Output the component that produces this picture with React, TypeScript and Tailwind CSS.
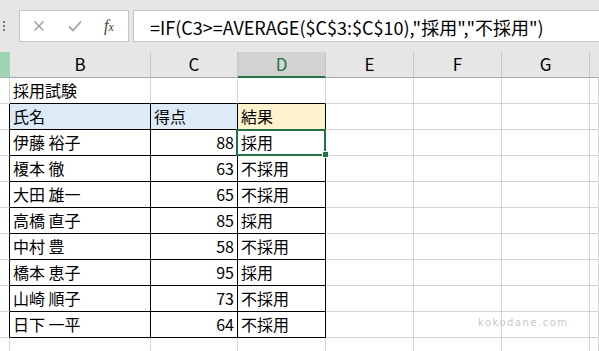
import React from "react";

type Person = { name: string; score: number; result: string };

const people: Person[] = [
  { name: "伊藤 裕子", score: 88, result: "採用" },
  { name: "榎本 徹", score: 63, result: "不採用" },
  { name: "大田 雄一", score: 65, result: "不採用" },
  { name: "高橋 直子", score: 85, result: "採用" },
  { name: "中村 豊", score: 58, result: "不採用" },
  { name: "橋本 恵子", score: 95, result: "採用" },
  { name: "山崎 順子", score: 73, result: "不採用" },
  { name: "日下 一平", score: 64, result: "不採用" },
];

const COLS = "grid grid-cols-[10px_141px_87px_88px_88px_88px_88px_1fr]";

function Cell({
  children,
  right = false,
  bottom = false,
  className = "",
}: {
  children?: React.ReactNode;
  right?: boolean;
  bottom?: boolean;
  className?: string;
}) {
  return (
    <div
      className={`h-[26px] border-r border-b flex items-center px-[3px] pb-[2px] leading-none text-[16px] text-black whitespace-nowrap ${
        right ? "border-r-black" : "border-r-[#d4d4d4]"
      } ${bottom ? "border-b-black" : "border-b-[#d4d4d4]"} ${className}`}
    >
      {children}
    </div>
  );
}

function FormulaBar() {
  return (
    <div className="h-[52px] bg-[#e6e6e6] flex items-start pt-[10px]">
      <div className="w-[19px] flex flex-col gap-[2px] pl-[3px] pt-[11px]">
        <span className="w-[2px] h-[2px] bg-[#7a7a7a]" />
        <span className="w-[2px] h-[2px] bg-[#7a7a7a]" />
        <span className="w-[2px] h-[2px] bg-[#7a7a7a]" />
      </div>
      <div className="w-[110px] h-[32px] bg-white border border-[#c6c6c6] flex items-center">
        <svg width="12" height="12" viewBox="0 0 12 12" className="ml-[13px]">
          <path d="M1.5 1.5l9 9M10.5 1.5l-9 9" stroke="#9a9a9a" strokeWidth="1.4" fill="none" />
        </svg>
        <svg width="14" height="12" viewBox="0 0 14 12" className="ml-[23px]">
          <path d="M1 6.5l4 4L13 1.5" stroke="#a3a3a3" strokeWidth="1.8" fill="none" />
        </svg>
        <span className="ml-[22px] font-['Liberation_Serif',serif] italic text-[16px] text-[#444] leading-none">
          f<span className="text-[12px]">x</span>
        </span>
      </div>
      <div className="ml-[4px] flex-1 h-[32px] bg-white border border-r-0 border-[#c6c6c6] flex items-center pl-[16px] pt-[1px] text-[18px] text-black whitespace-nowrap leading-none">
        =IF(C3&gt;=AVERAGE($C$3:$C$10),"採用","不採用")
      </div>
    </div>
  );
}

function ColumnHeaders() {
  const letters = ["B", "C", "D", "E", "F", "G"];
  return (
    <div className={COLS}>
      <div className="h-[26px] bg-[#9fd5b7] border-b border-b-[#ababab]" />
      {letters.map((l) =>
        l === "D" ? (
          <div
            key={l}
            className="h-[26px] bg-[#d2d2d2] border-r border-r-[#c6c6c6] border-b-2 border-b-[#217346] flex items-center justify-center pb-[2px] text-[17px] text-[#217346] leading-none"
          >
            {l}
          </div>
        ) : (
          <div
            key={l}
            className="h-[26px] bg-[#e6e6e6] border-r border-r-[#c6c6c6] border-b border-b-[#ababab] flex items-center justify-center pb-[3px] text-[17px] text-black leading-none"
          >
            {l}
          </div>
        )
      )}
      <div className="h-[26px] bg-[#e6e6e6] border-b border-b-[#ababab]" />
    </div>
  );
}

function Blanks() {
  return (
    <>
      <Cell />
      <Cell />
      <Cell />
      <Cell />
    </>
  );
}

export default function App() {
  return (
    <div className="relative w-[599px] h-[351px] overflow-hidden bg-white font-['Noto_Sans_CJK_JP',sans-serif]">
      <FormulaBar />
      <ColumnHeaders />

      <div className={COLS}>
        {/* row 1: title */}
        <Cell />
        <Cell bottom>採用試験</Cell>
        <Cell bottom />
        <Cell bottom />
        <Blanks />

        {/* row 2: table header */}
        <Cell right />
        <Cell right bottom className="bg-[#ddebf7]">
          氏名
        </Cell>
        <Cell right bottom className="bg-[#ddebf7]">
          得点
        </Cell>
        <Cell right bottom className="bg-[#fff2cc]">
          結果
        </Cell>
        <Blanks />

        {people.map((p, i) => (
          <React.Fragment key={p.name}>
            <Cell right />
            <Cell right bottom>
              {p.name}
            </Cell>
            <Cell right bottom className="justify-end">
              {p.score}
            </Cell>
            <Cell right bottom className="relative">
              {p.result}
              {i === 0 && (
                <>
                  <div className="absolute -left-[2px] -right-[1px] -top-[1px] -bottom-[1px] border-2 border-[#217346]" />
                  <div className="absolute left-[84px] top-[21px] w-[7px] h-[7px] bg-[#217346] border border-white z-10" />
                </>
              )}
            </Cell>
            <Blanks />
          </React.Fragment>
        ))}

        {/* row 11 */}
        <Cell />
        <Cell />
        <Cell />
        <Cell />
        <Blanks />
      </div>

      <div className="absolute left-[478px] top-[318px] text-[10px] tracking-[1.5px] text-[#c8c8c8] font-['DejaVu_Sans',sans-serif] leading-none">
        kokodane.com
      </div>
    </div>
  );
}
